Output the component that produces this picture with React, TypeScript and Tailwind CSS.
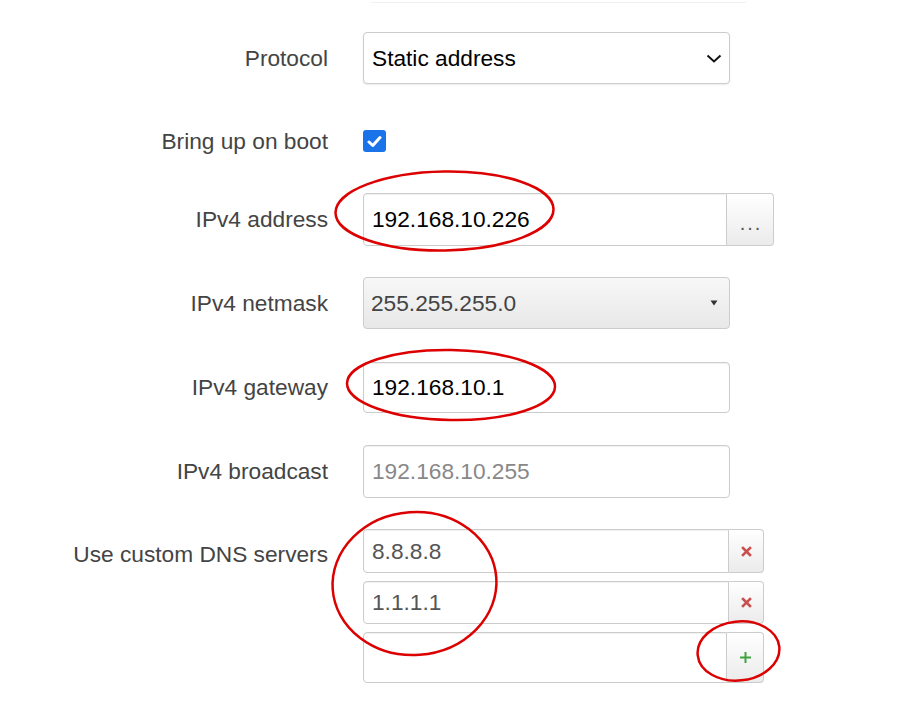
import React from "react";

const font = { fontFamily: '"Liberation Sans", Arial, sans-serif' };

function Label({ children }: { children: React.ReactNode }) {
  return (
    <div className="w-[328px] shrink-0 text-right text-[22.7px] text-[#444] leading-none">
      {children}
    </div>
  );
}

function TextBox({
  value,
  color,
  className,
}: {
  value: string;
  color: string;
  className: string;
}) {
  return (
    <div
      className={`flex items-center border border-[#ccc] bg-white pl-[8px] text-[22.7px] shadow-[inset_0_1px_1px_rgba(0,0,0,0.06)] ${color} ${className}`}
    >
      {value}
    </div>
  );
}

function SideButton({
  children,
  className,
}: {
  children: React.ReactNode;
  className: string;
}) {
  return (
    <div
      className={`flex items-center justify-center border border-l-0 border-[#ccc] rounded-r-[4px] bg-gradient-to-b from-white to-[#ebebeb] ${className}`}
    >
      {children}
    </div>
  );
}

const Cross = () => (
  <svg width="11" height="11" viewBox="0 0 11 11">
    <path d="M2 2 L9 9 M9 2 L2 9" stroke="#c9504d" strokeWidth="2.6" strokeLinecap="square" />
  </svg>
);

export default function App() {
  return (
    <div className="relative w-[906px] h-[701px] overflow-hidden bg-white" style={font}>
      {/* bottom edge of previous field */}
      <div className="ml-[370px] w-[377px] h-[3px] border-b border-[#f0f0f0] rounded-b-[4px]" />

      <div className="flex flex-col pt-[29px]">
        {/* Protocol */}
        <div className="flex items-center gap-[35px] h-[52px]">
          <Label>Protocol</Label>
          <div className="flex items-center justify-between w-[367px] h-[52px] border border-[#ccc] rounded-[4px] bg-white pl-[8px] pr-[7px] text-[22.7px] text-black shadow-[0_1px_2px_rgba(0,0,0,0.08)]">
            Static address
            <svg width="16" height="9" viewBox="0 0 16 9">
              <path d="M1.5 1.5 L8 7.5 L14.5 1.5" fill="none" stroke="#111" strokeWidth="2" />
            </svg>
          </div>
        </div>

        {/* Bring up on boot */}
        <div className="flex items-center gap-[35px] h-[52px] mt-[31px]">
          <Label>Bring up on boot</Label>
          <div className="flex items-center justify-center w-[23px] h-[22px] rounded-[3px] bg-[#1a73e8]">
            <svg width="15" height="13" viewBox="0 0 15 13">
              <path d="M2 7 L5.8 10.5 L13 2.5" fill="none" stroke="white" strokeWidth="3" strokeLinecap="round" strokeLinejoin="round" />
            </svg>
          </div>
        </div>

        {/* IPv4 address */}
        <div className="flex items-center gap-[35px] h-[53px] mt-[26px]">
          <Label>IPv4 address</Label>
          <div className="flex h-[53px]">
            <TextBox value="192.168.10.226" color="text-black" className="w-[364px] h-[53px] rounded-l-[4px]" />
            <SideButton className="w-[47px] h-[53px]">
              <span className="text-[20px] text-[#555] tracking-[2px] pl-[2px] pt-[6px]">...</span>
            </SideButton>
          </div>
        </div>

        {/* IPv4 netmask */}
        <div className="flex items-center gap-[35px] h-[52px] mt-[31px]">
          <Label>IPv4 netmask</Label>
          <div className="flex items-center justify-between w-[367px] h-[52px] border border-[#ccc] rounded-[4px] bg-gradient-to-b from-[#f7f7f7] to-[#e8e8e8] pl-[7px] pr-[11px] text-[22.7px] text-[#444]">
            255.255.255.0
            <svg width="8" height="6" viewBox="0 0 8 6">
              <path d="M0.5 0.5 L7.5 0.5 L4 5.5 Z" fill="#333" />
            </svg>
          </div>
        </div>

        {/* IPv4 gateway */}
        <div className="flex items-center gap-[35px] h-[51px] mt-[33px]">
          <Label>IPv4 gateway</Label>
          <TextBox value="192.168.10.1" color="text-black" className="w-[367px] h-[51px] rounded-[4px]" />
        </div>

        {/* IPv4 broadcast */}
        <div className="flex items-center gap-[35px] h-[53px] mt-[32px]">
          <Label>IPv4 broadcast</Label>
          <TextBox value="192.168.10.255" color="text-[#888]" className="w-[367px] h-[53px] rounded-[4px]" />
        </div>

        {/* DNS servers */}
        <div className="flex items-start gap-[35px] mt-[31px]">
          <div className="h-[50px] flex items-center">
            <Label>Use custom DNS servers</Label>
          </div>
          <div className="flex flex-col gap-[8px]">
            <div className="flex">
              <TextBox value="8.8.8.8" color="text-[#555]" className="w-[366px] h-[44px] rounded-l-[4px]" />
              <SideButton className="w-[35px] h-[44px]">
                <Cross />
              </SideButton>
            </div>
            <div className="flex">
              <TextBox value="1.1.1.1" color="text-[#555]" className="w-[366px] h-[43px] rounded-l-[4px]" />
              <SideButton className="w-[35px] h-[43px]">
                <Cross />
              </SideButton>
            </div>
            <div className="flex">
              <TextBox value="" color="text-[#555]" className="w-[364px] h-[51px] rounded-l-[4px]" />
              <SideButton className="w-[37px] h-[51px]">
                <svg width="13" height="13" viewBox="0 0 13 13">
                  <path d="M6.5 1 L6.5 12 M1 6.5 L12 6.5" stroke="#3fa33f" strokeWidth="2" />
                </svg>
              </SideButton>
            </div>
          </div>
        </div>
      </div>

      {/* red annotation circles */}
      <svg className="absolute inset-0 pointer-events-none" width="906" height="701" viewBox="0 0 906 701">
        <g fill="none" stroke="#dc0000" strokeWidth="2.5">
          <ellipse cx="444.5" cy="211" rx="109" ry="39.5" transform="rotate(-1 444.5 211)" />
          <ellipse cx="451" cy="385" rx="104" ry="35" transform="rotate(1 451 385)" />
          <ellipse cx="414.5" cy="583.5" rx="82" ry="71.5" transform="rotate(-4 414.5 583.5)" />
          <ellipse cx="738.5" cy="651" rx="41" ry="29.5" transform="rotate(-6 738.5 651)" />
        </g>
      </svg>
    </div>
  );
}
